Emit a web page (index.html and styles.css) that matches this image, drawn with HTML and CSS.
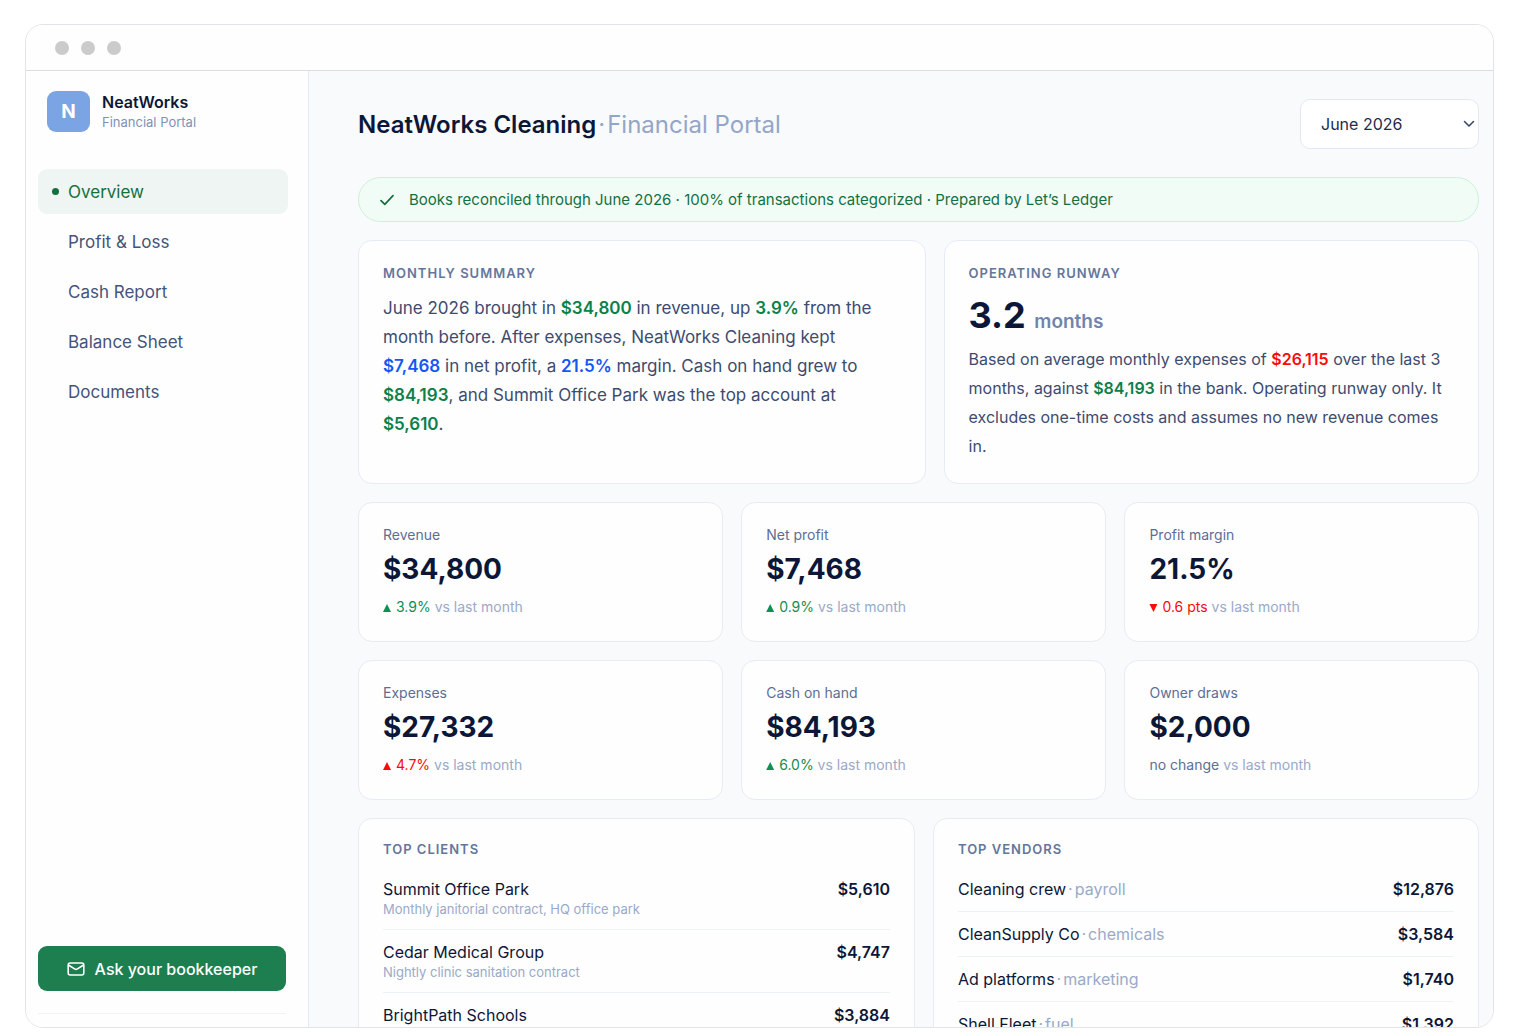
FILE: index.html
```html
<!DOCTYPE html>
<html lang="en">
<head>
    <meta charset="UTF-8">
    <meta name="viewport" content="width=device-width, initial-scale=1.0">
    <title>NeatWorks Cleaning - Financial Portal</title>
    <link rel="stylesheet" href="styles.css">
</head>
<body>
    <div class="window">
        <div class="titlebar">
            <span class="light"></span>
            <span class="light"></span>
            <span class="light"></span>
        </div>
        <div class="app">
            <aside class="sidebar">
                <div class="brand">
                    <div class="logo">N</div>
                    <div>
                        <div class="brand-name">NeatWorks</div>
                        <div class="brand-sub">Financial Portal</div>
                    </div>
                </div>
                <nav class="nav">
                    <a class="nav-item active" href="#">Overview</a>
                    <a class="nav-item" href="#">Profit &amp; Loss</a>
                    <a class="nav-item" href="#">Cash Report</a>
                    <a class="nav-item" href="#">Balance Sheet</a>
                    <a class="nav-item" href="#">Documents</a>
                </nav>
                <div class="sidebar-footer">
                    <button class="ask" type="button">
                        <svg width="18" height="14" viewBox="0 0 18 14" fill="none" stroke="currentColor" stroke-width="1.6" stroke-linecap="round" stroke-linejoin="round">
                            <rect x="1.2" y="1" width="15.6" height="12" rx="2"/>
                            <path d="M1.8 3.2 L8 7.1 Q9 7.7 10 7.1 L16.2 3.2"/>
                        </svg>
                        Ask your bookkeeper
                    </button>
                </div>
            </aside>

            <main class="main">
                <header class="header">
                    <h1>NeatWorks Cleaning<span><i>·</i>Financial Portal</span></h1>
                    <div class="month">
                        <select aria-label="Month">
                            <option>June 2026</option>
                            <option>May 2026</option>
                            <option>April 2026</option>
                        </select>
                        <svg class="chevron" width="12" height="8" viewBox="0 0 12 8" fill="none" stroke="currentColor" stroke-width="1.5" stroke-linecap="round" stroke-linejoin="round">
                            <path d="M1.5 1.5 L6 6 L10.5 1.5"/>
                        </svg>
                    </div>
                </header>

                <div class="banner">
                    <svg width="14" height="12" viewBox="0 0 14 12" fill="none" stroke="currentColor" stroke-width="1.7" stroke-linecap="round" stroke-linejoin="round">
                        <path d="M1 6.6 L4.8 10.4 L13 1.6"/>
                    </svg>
                    <span>Books reconciled through June 2026 · 100% of transactions categorized · Prepared by Let’s Ledger</span>
                </div>

                <div class="summary-row">
                    <section class="card">
                        <h2 class="label">Monthly summary</h2>
                        <p class="text">June 2026 brought in <b class="green">$34,800</b> in revenue, up <b class="green">3.9%</b> from the month before. After expenses, NeatWorks Cleaning kept <b class="blue">$7,468</b> in net profit, a <b class="blue">21.5%</b> margin. Cash on hand grew to <b class="green">$84,193</b>, and Summit Office Park was the top account at <b class="green">$5,610</b>.</p>
                    </section>
                    <section class="card">
                        <h2 class="label">Operating runway</h2>
                        <div class="runway">3.2 <span>months</span></div>
                        <p class="text">Based on average monthly expenses of <b class="red">$26,115</b> over the last 3 months, against <b class="green">$84,193</b> in the bank. Operating runway only. It excludes one-time costs and assumes no new revenue comes in.</p>
                    </section>
                </div>

                <div class="kpis">
                    <section class="kpi">
                        <div class="kpi-name">Revenue</div>
                        <div class="kpi-value">$34,800</div>
                        <div class="kpi-delta"><span class="up good">3.9%</span> vs last month</div>
                    </section>
                    <section class="kpi">
                        <div class="kpi-name">Net profit</div>
                        <div class="kpi-value">$7,468</div>
                        <div class="kpi-delta"><span class="up good">0.9%</span> vs last month</div>
                    </section>
                    <section class="kpi">
                        <div class="kpi-name">Profit margin</div>
                        <div class="kpi-value">21.5%</div>
                        <div class="kpi-delta"><span class="down bad">0.6 pts</span> vs last month</div>
                    </section>
                    <section class="kpi">
                        <div class="kpi-name">Expenses</div>
                        <div class="kpi-value">$27,332</div>
                        <div class="kpi-delta"><span class="up bad">4.7%</span> vs last month</div>
                    </section>
                    <section class="kpi">
                        <div class="kpi-name">Cash on hand</div>
                        <div class="kpi-value">$84,193</div>
                        <div class="kpi-delta"><span class="up good">6.0%</span> vs last month</div>
                    </section>
                    <section class="kpi">
                        <div class="kpi-name">Owner draws</div>
                        <div class="kpi-value">$2,000</div>
                        <div class="kpi-delta"><span class="flat">no change</span> vs last month</div>
                    </section>
                </div>

                <div class="lists">
                    <section class="card">
                        <h2 class="label">Top clients</h2>
                        <ul class="list clients">
                            <li>
                                <div>Summit Office Park<small>Monthly janitorial contract, HQ office park</small></div>
                                <b>$5,610</b>
                            </li>
                            <li>
                                <div>Cedar Medical Group<small>Nightly clinic sanitation contract</small></div>
                                <b>$4,747</b>
                            </li>
                            <li>
                                <div>BrightPath Schools</div>
                                <b>$3,884</b>
                            </li>
                        </ul>
                    </section>
                    <section class="card">
                        <h2 class="label">Top vendors</h2>
                        <ul class="list">
                            <li><div>Cleaning crew<span><i>·</i>payroll</span></div><b>$12,876</b></li>
                            <li><div>CleanSupply Co<span><i>·</i>chemicals</span></div><b>$3,584</b></li>
                            <li><div>Ad platforms<span><i>·</i>marketing</span></div><b>$1,740</b></li>
                            <li><div>Shell Fleet<span><i>·</i>fuel</span></div><b>$1,392</b></li>
                        </ul>
                    </section>
                </div>
            </main>
        </div>
    </div>
</body>
</html>
```
FILE: styles.css
```css
* {
    box-sizing: border-box;
}

body {
    margin: 0;
    height: 100vh;
    padding: 24px 24px 8px 25px;
    background-color: #fff;
    font-family: Inter, "Liberation Sans", sans-serif;
    font-size: 16px;
    color: #0c1738;
}

h1,
h2,
p,
ul {
    margin: 0;
    padding: 0;
}

svg {
    flex: none;
}

/* dot separators */
i {
    margin: 0 2px;
    font-style: normal;
}

.window {
    display: flex;
    flex-direction: column;
    height: 100%;
    border: 1px solid #e2e4ea;
    border-radius: 18px;
    overflow: hidden;
}

.titlebar {
    display: flex;
    flex: none;
    align-items: center;
    gap: 12px;
    height: 46px;
    padding-left: 29px;
    border-bottom: 1px solid #dcdde1;
    background-color: #fefefe;
}

.light {
    width: 14px;
    height: 14px;
    border-radius: 50%;
    background-color: #cbcbcb;
}

.app {
    display: flex;
    flex: 1;
    min-height: 0;
}

/* sidebar */

.sidebar {
    display: flex;
    flex: none;
    flex-direction: column;
    width: 283px;
    padding: 20px 20px 13px 12px;
    border-right: 1px solid #e3e9f4;
    background-color: #fefefe;
}

.brand {
    display: flex;
    align-items: center;
    gap: 12px;
    padding-left: 9px;
}

.logo {
    width: 43px;
    height: 41px;
    border-radius: 9px;
    background-color: #7ba4e4;
    color: #fff;
    font-size: 19px;
    font-weight: 700;
    line-height: 41px;
    text-align: center;
}

.brand-name {
    font-size: 16px;
    font-weight: 600;
    line-height: 20px;
}

.brand-sub {
    color: #7f92b6;
    font-size: 13px;
    line-height: 20px;
}

.nav {
    display: flex;
    flex-direction: column;
    gap: 5px;
    margin-top: 37px;
}

.nav-item {
    display: flex;
    align-items: center;
    height: 45px;
    padding-left: 30px;
    border-radius: 9px;
    color: #44547a;
    font-size: 17px;
    text-decoration: none;
}

.nav-item.active {
    padding-left: 14px;
    background-color: #eff5f2;
    color: #14703f;
}

.nav-item.active::before {
    content: "";
    width: 7px;
    height: 7px;
    margin-right: 9px;
    border-radius: 50%;
    background-color: #14703f;
}

.sidebar-footer {
    margin-top: auto;
    margin-right: 2px;
    padding-bottom: 22px;
    border-bottom: 1px solid #f0f2f8;
}

.ask {
    display: flex;
    align-items: center;
    justify-content: center;
    gap: 10px;
    width: 100%;
    height: 45px;
    padding: 0;
    border: none;
    border-radius: 9px;
    background-color: #1d7f4f;
    color: #fff;
    font-family: inherit;
    font-size: 16px;
    font-weight: 500;
    white-space: nowrap;
    cursor: pointer;
}

/* main column */

.main {
    display: flex;
    flex: 1;
    flex-direction: column;
    gap: 18px;
    min-width: 0;
    padding: 28px 14px 0 49px;
    background-color: #f9fafc;
}

.main > * {
    flex: none;
}

.header {
    display: flex;
    align-items: center;
    justify-content: space-between;
    margin-bottom: 10px;
}

h1 {
    font-size: 24px;
    font-weight: 600;
}

h1 span {
    color: #94a6c8;
    font-weight: 400;
}

.month {
    position: relative;
}

.month select {
    width: 179px;
    height: 50px;
    padding: 0 20px;
    border: 1px solid #e3e9f4;
    border-radius: 10px;
    background-color: #fff;
    color: #1e2b4d;
    font-family: inherit;
    font-size: 16px;
    appearance: none;
}

.chevron {
    position: absolute;
    top: 21px;
    right: 4px;
    color: #34436a;
    pointer-events: none;
}

.banner {
    display: flex;
    align-items: center;
    gap: 15px;
    height: 45px;
    padding: 0 21px;
    border: 1px solid #c8f1d9;
    border-radius: 23px;
    background-color: #f2fcf6;
    color: #14703f;
    font-size: 15px;
}

.card,
.kpi {
    border: 1px solid #e6ebf5;
    border-radius: 14px;
    background-color: #fefefe;
}

.card {
    padding: 24px 24px 22px;
}

.label {
    color: #64769c;
    font-size: 13px;
    font-weight: 600;
    line-height: 16px;
    letter-spacing: 1px;
    text-transform: uppercase;
}

.summary-row {
    display: grid;
    grid-template-columns: 1.06fr 1fr;
    gap: 18px;
}

.text {
    margin-top: 13px;
    padding-right: 20px;
    color: #3d4b6e;
    font-size: 17px;
    line-height: 29px;
}

.text b {
    font-weight: 600;
}

.text .green {
    color: #0c8048;
}

.text .blue {
    color: #1457f5;
}

.text .red {
    color: #fb0a0a;
}

.runway {
    margin-top: 12px;
    font-size: 36px;
    font-weight: 700;
    line-height: 44px;
}

.runway span {
    color: #7084ad;
    font-size: 19px;
    font-weight: 600;
    line-height: 1;
}

.runway + .text {
    margin-top: 8px;
    padding-right: 0;
    font-size: 16px;
}

.kpis {
    display: grid;
    grid-template-columns: 1.03fr 1.03fr 1fr;
    gap: 18px;
}

.kpi {
    padding: 22px 24px 24px;
}

.kpi-name {
    color: #5c6e94;
    font-size: 14px;
    line-height: 20px;
}

.kpi-value {
    margin: 6px 0 10px;
    font-size: 28px;
    font-weight: 700;
    line-height: 36px;
}

.kpi-delta {
    color: #9aa9c8;
    font-size: 14px;
    line-height: 20px;
}

.good {
    color: #0c9053;
}

.bad {
    color: #fb0a0a;
}

.flat {
    color: #5c6e94;
}

/* trend triangles */
.up::before,
.down::before {
    content: "";
    display: inline-block;
    width: 8px;
    height: 8px;
    margin-right: 5px;
    background-color: currentColor;
    clip-path: polygon(50% 0, 100% 100%, 0 100%);
}

.down::before {
    clip-path: polygon(0 0, 100% 0, 50% 100%);
}

.lists {
    display: grid;
    grid-template-columns: 1.02fr 1fr;
    gap: 18px;
}

.lists .card {
    padding-top: 22px;
}

.list {
    margin-top: 10px;
    list-style: none;
}

.list li {
    display: flex;
    justify-content: space-between;
    padding: 12px 0;
    border-bottom: 1px solid #edf1f8;
    font-size: 16px;
    line-height: 20px;
}

.clients li {
    padding-bottom: 10px;
}

.list span {
    color: #9aa9c8;
}

.list b {
    font-weight: 600;
}

.list small {
    display: block;
    color: #9aa9c8;
    font-size: 13px;
}
```
